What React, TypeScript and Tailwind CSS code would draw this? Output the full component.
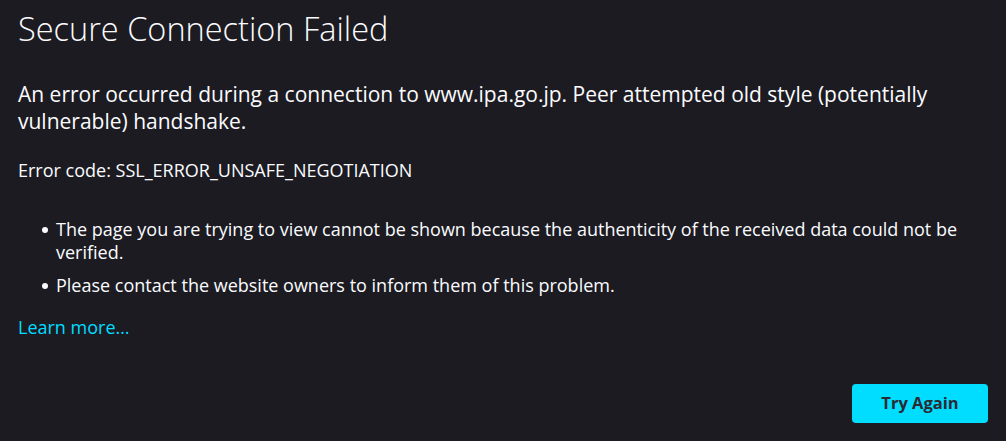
export default function App() {
  return (
    <div className="min-h-[441px] w-full bg-[#1c1b22] text-[#fbfbfe] font-['Open_Sans',sans-serif]">
      <div className="w-[970px] ml-[18px] pt-[9px]">
        <h1 className="text-[32.5px] font-light leading-[40px]">Secure Connection Failed</h1>

        <p className="mt-[32px] text-[21px] leading-[27px]">
          An error occurred during a connection to www.ipa.go.jp. Peer attempted old style (potentially vulnerable) handshake.
        </p>

        <p className="mt-[24px] text-[18px] leading-[23px]">Error code: SSL_ERROR_UNSAFE_NEGOTIATION</p>

        <ul className="mt-[36px] pl-[38px] text-[18px] leading-[23px] list-none space-y-[10px]">
          <li className="relative">
            <span className="absolute left-[-14px] top-[9px] w-[6px] h-[6px] rounded-full bg-[#fbfbfe]" />
            The page you are trying to view cannot be shown because the authenticity of the received data could not be verified.
          </li>
          <li className="relative">
            <span className="absolute left-[-14px] top-[9px] w-[6px] h-[6px] rounded-full bg-[#fbfbfe]" />
            Please contact the website owners to inform them of this problem.
          </li>
        </ul>

        <a href="#" className="block mt-[19px] text-[18px] leading-[23px] text-[#00ddff]">Learn more…</a>

        <div className="flex justify-end mt-[45px]">
          <button className="w-[136px] h-[39px] rounded-[4px] bg-[#00ddff] text-[#2b2a33] text-[16.5px] font-bold">Try Again</button>
        </div>
      </div>
    </div>
  )
}
